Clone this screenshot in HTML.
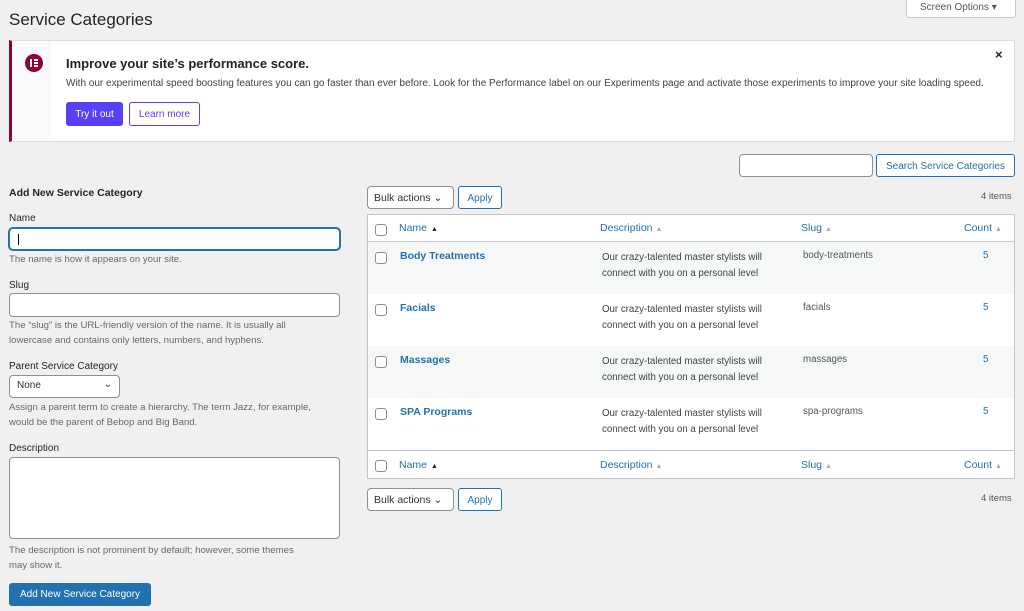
<!DOCTYPE html>
<html><head><style>
*{box-sizing:border-box;margin:0;padding:0}
body{width:1024px;height:611px;background:#f0f0f1;font-family:"Liberation Sans",sans-serif;color:#3c434a;position:relative;overflow:hidden;font-size:10px}
.a{position:absolute}
h1{position:absolute;left:9px;top:10px;font-size:17px;font-weight:400;color:#1d2327}
.so{left:906px;top:-1px;width:110px;height:19px;background:#fff;border:1px solid #c3c4c7;border-top:none;border-radius:0 0 3px 3px;font-size:10px;color:#50575e;padding:3px 0 0 13px}
.notice{left:9px;top:40px;width:1006px;height:102px;background:#fff;border:1px solid #dcdcde;border-left:3px solid #92003b}
.notice .side{position:absolute;left:0;top:0;width:39px;height:100px;background:#f9f9fc}
.logo{position:absolute;left:13px;top:13px;width:18px;height:18px;border-radius:50%;background:#92003b}
.btn{position:absolute;font-size:10px;border-radius:3px}
.inp{position:absolute;background:#fff;border:1px solid #8c8f94;border-radius:4px}
.lbl{position:absolute;left:9px;font-size:10px;color:#1d2327}
.help{position:absolute;left:9px;font-size:9.6px;color:#646970;line-height:15px;width:318px}
.sec{position:absolute;background:#fff;border:1px solid #2271b1;color:#2271b1;border-radius:3px;font-size:10px;text-align:center}
.cb{position:absolute;width:12px;height:12px;border:1px solid #8c8f94;border-radius:3px;background:#fff}
.link{color:#2271b1}
.row{position:absolute;left:368px;width:646px;height:52px}
.nm{position:absolute;left:32px;top:8px;font-weight:700;font-size:10.5px;color:#2271b1}
.ds{position:absolute;left:234px;top:8px;font-size:9.7px;line-height:16px;color:#3c434a}
.sl{position:absolute;left:435px;top:8px;font-size:9.7px;color:#50575e}
.ct{position:absolute;left:615px;top:8px;font-size:10px;color:#2271b1}
.arr{color:#a7aaad;font-size:7px;margin-left:3px}
</style></head><body>
<h1>Service Categories</h1>
<div class="a so">Screen Options ▾</div>
<div class="a notice"><div class="side"><div class="logo"><div class="a" style="left:5px;top:5px;width:2px;height:8px;background:#fff"></div><div class="a" style="left:9px;top:5px;width:4px;height:2px;background:#fff"></div><div class="a" style="left:9px;top:8px;width:4px;height:2px;background:#fff"></div><div class="a" style="left:9px;top:11px;width:4px;height:2px;background:#fff"></div></div></div>
<div class="a" style="left:54px;top:15px;font-size:13px;font-weight:700;color:#1d2327">Improve your site’s performance score.</div>
<div class="a" style="left:54px;top:37px;font-size:10px;color:#3c434a;white-space:nowrap">With our experimental speed boosting features you can go faster than ever before. Look for the Performance label on our Experiments page and activate those experiments to improve your site loading speed.</div>
<div class="btn" style="left:54px;top:61px;width:57px;height:24px;background:#5741f7;color:#fff;padding-top:7px;text-align:center">Try it out</div>
<div class="btn" style="left:117px;top:61px;width:71px;height:24px;border:1px solid #5741f7;color:#5741f7;padding-top:6px;text-align:center">Learn more</div>
<div class="a" style="left:983px;top:6px;font-size:13px;font-weight:700;color:#1d2327">×</div>
</div>

<div class="a" style="left:9px;top:187px;font-size:10.5px;font-weight:700;color:#1d2327">Add New Service Category</div>
<div class="lbl" style="top:213px">Name</div>
<div class="inp" style="left:9px;top:228px;width:331px;height:22px;border:1px solid #2271b1;box-shadow:0 0 0 1px #2271b1"><div class="a" style="left:8px;top:5px;width:1px;height:11px;background:#000"></div></div>
<div class="help" style="top:252px">The name is how it appears on your site.</div>
<div class="lbl" style="top:280px">Slug</div>
<div class="inp" style="left:9px;top:293px;width:331px;height:24px"></div>
<div class="help" style="top:318px">The “slug” is the URL-friendly version of the name. It is usually all lowercase and contains only letters, numbers, and hyphens.</div>
<div class="lbl" style="top:361px">Parent Service Category</div>
<div class="inp" style="left:9px;top:375px;width:111px;height:23px;padding:4px 0 0 7px;font-size:10px;color:#2c3338">None<span class="a" style="right:7px;top:3px;font-size:10px">⌄</span></div>
<div class="help" style="top:400px;width:322px">Assign a parent term to create a hierarchy. The term Jazz, for example, would be the parent of Bebop and Big Band.</div>
<div class="lbl" style="top:443px">Description</div>
<div class="inp" style="left:9px;top:457px;width:331px;height:82px"></div>
<div class="help" style="top:543px;width:300px">The description is not prominent by default; however, some themes may show it.</div>
<div class="btn" style="left:9px;top:583px;width:142px;height:23px;background:#2271b1;color:#fff;padding-top:6px;text-align:center">Add New Service Category</div>

<div class="inp" style="left:739px;top:154px;width:134px;height:23px"></div>
<div class="sec" style="left:876px;top:154px;width:139px;height:23px;padding-top:6px">Search Service Categories</div>
<div class="inp" style="left:367px;top:186px;width:87px;height:23px;padding:5px 0 0 6px;font-size:10.5px;color:#2c3338">Bulk actions ⌄</div>
<div class="sec" style="left:458px;top:186px;width:44px;height:23px;padding-top:6px">Apply</div>
<div class="a" style="left:981px;top:191px;font-size:9.5px;color:#50575e">4 items</div>

<div class="a" style="left:367px;top:214px;width:648px;height:265px;background:#fff;border:1px solid #c3c4c7"></div>
<div class="row" style="top:215px;height:27px;border-bottom:1px solid #c3c4c7;font-size:10.5px">
<div class="cb" style="left:7px;top:9px"></div>
<div class="a link" style="left:31px;top:7px">Name<span style="color:#1d2327;font-size:7px;margin-left:4px">▲</span></div>
<div class="a link" style="left:232px;top:7px">Description<span class="arr">▲</span></div>
<div class="a link" style="left:433px;top:7px">Slug<span class="arr">▲</span></div>
<div class="a link" style="left:596px;top:7px">Count<span class="arr">▲</span></div>
</div>
<div class="row" style="top:242px;background:#f6f7f7"><div class="cb" style="left:7px;top:10px"></div><div class="nm">Body Treatments</div><div class="ds">Our crazy-talented master stylists will<br>connect with you on a personal level</div><div class="sl">body-treatments</div><div class="ct">5</div></div>
<div class="row" style="top:294px"><div class="cb" style="left:7px;top:10px"></div><div class="nm">Facials</div><div class="ds">Our crazy-talented master stylists will<br>connect with you on a personal level</div><div class="sl">facials</div><div class="ct">5</div></div>
<div class="row" style="top:346px;background:#f6f7f7"><div class="cb" style="left:7px;top:10px"></div><div class="nm">Massages</div><div class="ds">Our crazy-talented master stylists will<br>connect with you on a personal level</div><div class="sl">massages</div><div class="ct">5</div></div>
<div class="row" style="top:398px"><div class="cb" style="left:7px;top:10px"></div><div class="nm">SPA Programs</div><div class="ds">Our crazy-talented master stylists will<br>connect with you on a personal level</div><div class="sl">spa-programs</div><div class="ct">5</div></div>
<div class="row" style="top:450px;height:28px;border-top:1px solid #c3c4c7;font-size:10.5px">
<div class="cb" style="left:7px;top:9px"></div>
<div class="a link" style="left:31px;top:8px">Name<span style="color:#1d2327;font-size:7px;margin-left:4px">▲</span></div>
<div class="a link" style="left:232px;top:8px">Description<span class="arr">▲</span></div>
<div class="a link" style="left:433px;top:8px">Slug<span class="arr">▲</span></div>
<div class="a link" style="left:596px;top:8px">Count<span class="arr">▲</span></div>
</div>
<div class="inp" style="left:367px;top:488px;width:87px;height:23px;padding:5px 0 0 6px;font-size:10.5px;color:#2c3338">Bulk actions ⌄</div>
<div class="sec" style="left:458px;top:488px;width:44px;height:23px;padding-top:6px">Apply</div>
<div class="a" style="left:981px;top:493px;font-size:9.5px;color:#50575e">4 items</div>
</body></html>
